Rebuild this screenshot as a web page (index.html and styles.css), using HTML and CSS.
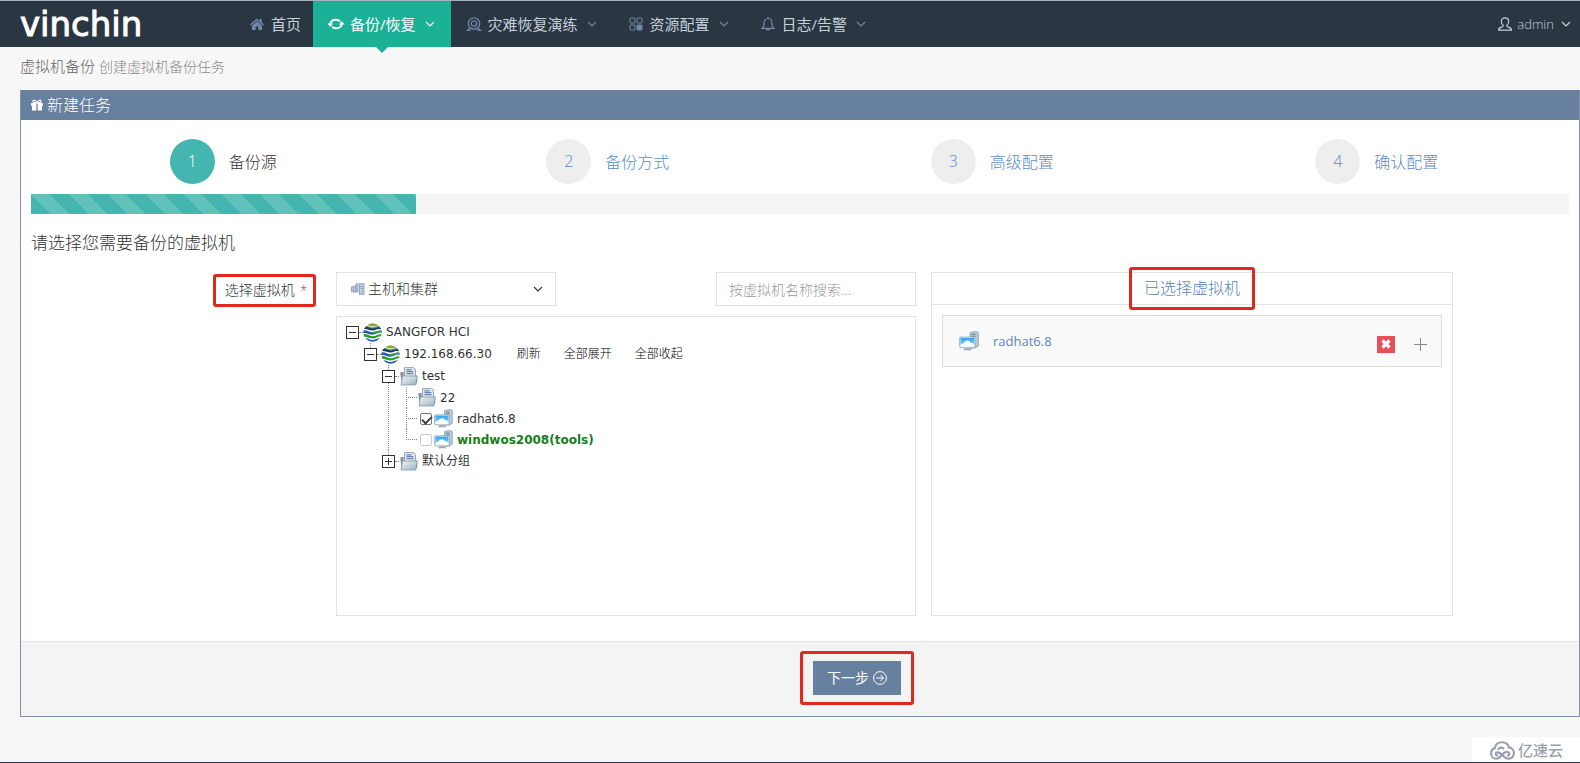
FILE: index.html
```html
<!DOCTYPE html>
<html lang="zh-CN">
<head>
<meta charset="utf-8">
<meta name="viewport" content="width=device-width, initial-scale=1">
<title>新建任务</title>
<link rel="stylesheet" href="styles.css">
</head>
<body>
<svg class="defs" width="0" height="0" aria-hidden="true">
  <defs>
    <linearGradient id="folderFill" x1="0" y1="0" x2="1" y2="1">
      <stop offset="0" stop-color="#eef3f6"/><stop offset="1" stop-color="#9db3c1"/>
    </linearGradient>
    <linearGradient id="screenFill" x1="0" y1="0" x2="0" y2="1">
      <stop offset="0" stop-color="#2fa9f0"/><stop offset="1" stop-color="#8fd6fb"/>
    </linearGradient>
    <clipPath id="globeClip"><circle cx="9.500" cy="9.500" r="9.300"/></clipPath>
    <symbol id="chevron" viewBox="0 0 10 10"><path d="M1 3l4 4 4-4" fill="none" stroke="currentColor" stroke-width="1.200"/></symbol>
    <symbol id="globe" viewBox="0 0 19 19">
      <g clip-path="url(#globeClip)">
        <path d="M4 2C7-1 13-1 16 3c-3-1-4 .5-6.500.5S6 2 4 2z" fill="#8fa63a"/>
        <path d="M1.500 4C5 2.500 6 5 9.500 5S14 2.500 18 4v2.500C14 5 13 7.500 9.500 7.500S4 5.500 1 6z" fill="#22356f"/>
        <path d="M3 3.500C6 3 7 5 9.500 5S14 3 17 4" fill="none" stroke="#4e9b3c" stroke-width="1.100"/>
        <path d="M0 7.500c4-1 6 1.800 9.500 1.800C13 9.300 14 7 19 7.500v2.200c-4-.7-6 2.100-9.500 2.100C6 11.800 4 9.500 0 10z" fill="#2d58b4"/>
        <path d="M8 9c3 .5 5-1.800 11-1v1.500c-5-.7-6 1-9 1z" fill="#35b52f"/>
        <path d="M0 11.200c4-.6 6 2 9.500 2 3.500 0 5.500-2.500 9.500-2v2c-4-.5-6 2.200-9.500 2.200-3.500 0-5.500-2.200-9.500-1.700z" fill="#21a428"/>
        <path d="M2 15.300c3-.2 4.500 1.700 7.500 1.700s4.500-2 8-1.700l-3 3.700h-9z" fill="#2c59bd"/>
      </g>
    </symbol>
    <symbol id="folder" viewBox="0 0 19 19">
      <path d="M5.500 .6h9L16.500 2.500v9h-11z" fill="#dfe6ec" stroke="#8296a8" stroke-width=".800"/>
      <path d="M7.500 2.800h5M7.500 4.700h7M7.500 6.600h7" stroke="#6689b0" stroke-width="1.200"/>
      <path d="M1.200 6l1-1h2.500v5h12v-2l1.500 1V15l-2 3H3z" fill="#8195a3"/>
      <path d="M3.500 9h14.800l-1.500 9H2z" fill="url(#folderFill)" stroke="#7d909e" stroke-width=".700"/>
    </symbol>
    <symbol id="vm" viewBox="0 0 20 20">
      <path d="M11 1.500L17 .5l2.300 1v13.500l-3 2h-5z" fill="#b9c9d6" stroke="#8096a8" stroke-width=".700"/>
      <path d="M12.500 3.300h4M12.500 5.300h4" stroke="#5f7388" stroke-width=".900"/>
      <rect x=".6" y="6" width="15.500" height="10.800" rx="1" fill="#d5e2ea" stroke="#8da0ae" stroke-width=".700"/>
      <rect x="1.600" y="7" width="13.500" height="8.800" fill="url(#screenFill)"/>
      <path d="M1.600 15.800v-1.600c1.200-1.900 2.300-2.200 3.200-2 1-3.300 5.600-3.500 6.800-.3 1.800-.3 2.700.5 3.500 2.300v1.600z" fill="#fff"/>
      <path d="M6 17.200h5l2 2H4z" fill="#9aa9b5"/>
    </symbol>
  </defs>
</svg>

<header class="topbar">
  <a class="logo" href="#">vinchin</a>
  <nav class="nav">
    <a class="nav-item nav-home" href="#">
      <svg class="nav-icon" viewBox="0 0 14 14"><path d="M7 1.500L0 7.500l.9 1L7 3.400l6.100 5.100.9-1-2.300-2V2h-1.900v1.900z" fill="currentColor"/><path d="M7 4.400L2 8.500V13h3.700V9.500h2.600V13H12V8.500z" fill="currentColor"/></svg>
      <span>首页</span>
    </a>
    <a class="nav-item nav-menu active" href="#">
      <svg class="nav-icon" viewBox="0 0 14 14"><path d="M1.200 7.500C1.500 4.300 4 2.700 6.800 2.700c1.600 0 2.900.5 4 1.600" fill="none" stroke="currentColor" stroke-width="2"/><path d="M-1.500 6.500h5.600L1.300 10z" fill="currentColor"/><path d="M12.800 6.500c-.3 3.200-2.800 4.800-5.600 4.800-1.600 0-2.900-.5-4-1.600" fill="none" stroke="currentColor" stroke-width="2"/><path d="M15.500 7.500H9.900L12.700 4z" fill="currentColor"/></svg>
      <span>备份/恢复</span>
      <svg class="chevron"><use href="#chevron"/></svg>
    </a>
    <a class="nav-item nav-menu" href="#">
      <svg class="nav-icon" viewBox="0 0 14 14" fill="none" stroke="currentColor" stroke-width="1.300"><circle cx="7" cy="6.500" r="5.700"/><circle cx="7" cy="6.500" r="2.700"/><path d="M3 11l-2.300 2.300h2.800M11 11l2.300 2.300h-2.800"/></svg>
      <span>灾难恢复演练</span>
      <svg class="chevron"><use href="#chevron"/></svg>
    </a>
    <a class="nav-item nav-menu" href="#">
      <svg class="nav-icon" viewBox="0 0 14 14" fill="none" stroke="currentColor"><rect x="1" y="1" width="5" height="5" rx=".5"/><rect x="8" y="1" width="5" height="5" rx=".5"/><rect x="1" y="8" width="5" height="5" rx=".5"/><rect x="8" y="8" width="5" height="5" rx=".5" fill="currentColor"/></svg>
      <span>资源配置</span>
      <svg class="chevron"><use href="#chevron"/></svg>
    </a>
    <a class="nav-item nav-menu" href="#">
      <svg class="nav-icon" viewBox="0 0 14 14" fill="none" stroke="currentColor" stroke-width="1.200"><path d="M1.200 11.400c1.600-1 1.900-2.600 1.900-5.200C3.100 3.400 4.600 1.500 7 1.500s3.900 1.900 3.900 4.700c0 2.600.3 4.200 1.900 5.200zM7 0v1.500M5.300 11.600c.2 1.800 3.200 1.800 3.400 0"/></svg>
      <span>日志/告警</span>
      <svg class="chevron"><use href="#chevron"/></svg>
    </a>
  </nav>
  <a class="user" href="#">
    <svg class="nav-icon" viewBox="0 0 14 14" fill="none" stroke="currentColor" stroke-width="1.200"><path d="M5.300 8.300C3.900 7.500 3.300 6 3.300 4.400 3.300 2.300 4.800.8 7 .8s3.700 1.500 3.700 3.600c0 1.600-.6 3.100-2 3.900-.3 1.200.4 1.500 1.800 1.900 1.900.5 2.900 1 2.900 2.900H.6c0-1.900 1-2.400 2.900-2.900 1.400-.4 2.100-.7 1.800-1.900z"/></svg>
    <span>admin</span>
    <svg class="chevron"><use href="#chevron"/></svg>
  </a>
</header>

<h1 class="page-title">虚拟机备份 <small>创建虚拟机备份任务</small></h1>

<main class="panel">
  <h2 class="panel-head">
    <svg class="gift" viewBox="0 0 12 12" fill="currentColor"><path d="M0 4h5v3H0zM7 4h5v3H7zM1 7h4v4.500H1zM7 7h4v4.500H7z"/><path d="M5.500 4h1v7.500h-1z" opacity=".7"/><path d="M6 4C5 1 2 .2 2 2.300 2 3.700 4 4 6 4zm0 0c1-3 4-3.800 4-1.700C10 3.700 8 4 6 4z" fill="none" stroke="currentColor" stroke-width="1.300"/></svg>
    新建任务
  </h2>
  <div class="panel-body">
    <ol class="steps">
      <li class="step current"><a href="#"><span class="num">1</span>备份源</a></li>
      <li class="step"><a href="#"><span class="num">2</span>备份方式</a></li>
      <li class="step"><a href="#"><span class="num">3</span>高级配置</a></li>
      <li class="step"><a href="#"><span class="num">4</span>确认配置</a></li>
    </ol>
    <div class="progress"><div class="bar"></div></div>
    <h3 class="prompt">请选择您需要备份的虚拟机</h3>

    <div class="form">
      <label class="field-label" for="view">选择虚拟机 <span class="required">*</span></label>
      <div class="source">
        <div class="filters">
          <div class="select-box">
            <svg class="select-icon" viewBox="0 0 14 13" fill="#c3cede" stroke="#8c9db8" stroke-width=".900"><path d="M.5 4h2v5h-2zM2.500 3h2.500v6H2.500zM5 .8h2V9H5z"/><rect x="8.500" y=".8" width="4.500" height="10.500"/><path d="M9.500 3.500h2.500M9.500 5.500h2.500M10 9h2"/></svg>
            <select id="view"><option>主机和集群</option></select>
            <svg class="chevron"><use href="#chevron"/></svg>
          </div>
          <input class="search" type="text" aria-label="搜索" placeholder="按虚拟机名称搜索...">
        </div>
        <div class="tree-box">
          <ul class="tree">
            <li>
              <div class="row"><button class="toggle" aria-label="收起"></button><i class="link"></i><svg class="node"><use href="#globe"/></svg><span>SANGFOR HCI</span></div>
              <ul>
                <li>
                  <div class="row"><button class="toggle" aria-label="收起"></button><i class="link"></i><svg class="node"><use href="#globe"/></svg><span>192.168.66.30</span>
                    <span class="actions"><a href="#">刷新</a><a href="#">全部展开</a><a href="#">全部收起</a></span></div>
                  <ul>
                    <li>
                      <div class="row"><button class="toggle" aria-label="收起"></button><i class="link"></i><svg class="node"><use href="#folder"/></svg><span>test</span></div>
                      <ul>
                        <li><div class="row leaf"><i class="branch"></i><svg class="node"><use href="#folder"/></svg><span>22</span></div></li>
                        <li><div class="row leaf"><i class="branch"></i><input class="check" type="checkbox" id="vm1" checked><svg class="node"><use href="#vm"/></svg><label for="vm1">radhat6.8</label></div></li>
                        <li><div class="row leaf"><i class="branch"></i><input class="check" type="checkbox" id="vm2"><svg class="node"><use href="#vm"/></svg><label class="tools" for="vm2">windwos2008(tools)</label></div></li>
                      </ul>
                    </li>
                    <li>
                      <div class="row"><button class="toggle closed" aria-label="展开"></button><i class="link"></i><svg class="node"><use href="#folder"/></svg><span>默认分组</span></div>
                    </li>
                  </ul>
                </li>
              </ul>
            </li>
          </ul>
        </div>
      </div>
      <section class="selected">
        <h4 class="selected-head"><span class="marked">已选择虚拟机</span></h4>
        <div class="vm-card">
          <svg class="vm-icon"><use href="#vm"/></svg>
          <a class="vm-name" href="#">radhat6.8</a>
          <div class="vm-actions">
            <button class="remove" aria-label="移除"><svg viewBox="0 0 10 10"><path d="M1.500 1.500l7 7M8.500 1.500l-7 7" stroke="#fff" stroke-width="3.200"/></svg></button>
            <button class="expand" aria-label="展开"><svg viewBox="0 0 13 13"><path d="M6.500 0v13M0 6.500h13" stroke="#888" stroke-width="1"/></svg></button>
          </div>
        </div>
      </section>
    </div>
  </div>
  <div class="panel-foot">
    <div class="next-frame">
      <button class="next">下一步<svg viewBox="0 0 14 14" fill="none" stroke="#fff"><circle cx="7" cy="7" r="6.400"/><path d="M3 7h7.500M7.500 4l3 3-3 3"/></svg></button>
    </div>
  </div>
</main>

<div class="watermark">
  <svg viewBox="0 0 26 20" fill="none" stroke="#9b9fad" stroke-width="2.200" stroke-linecap="round"><path d="M5 7.500C5.500 3.800 8.500 1.300 12.500 1.300c3.800 0 6.500 2 7.500 5.700 3 .2 5 2.600 5 5.700 0 3.500-2.500 6-6 6-5 0-6.500-7.200-11.500-6.700-2.300.3-2.200 3.200 0 3.200M5 7.500c-2.500.6-4 3-4 5.700 0 3.300 2.400 5.500 5.500 5.500 5 0 6.500-7.700 11.500-7.200 3 .3 3 3.700.5 3.700M8.500 8.500c1.500-2 4-2 5.500-.5"/></svg>
  <span>亿速云</span>
</div>
</body>
</html>
```

FILE: styles.css
```css
* { box-sizing: border-box; }

body {
  margin: 0;
  min-height: 100vh;
  position: relative;
  background: #f7f7f7;
  border-bottom: 1px solid #2b3643;
  color: #333;
  font: 300 14px/20px "Open Sans", "Noto Sans CJK SC", sans-serif;
}

a { color: inherit; text-decoration: none; }
ul, ol { list-style: none; margin: 0; padding: 0; }
h1, h2, h3, h4 { margin: 0; font-weight: 300; }
button, input, select { font: inherit; color: inherit; margin: 0; border-radius: 0; }
button { padding: 0; border: 0; background: none; cursor: pointer; }
svg { display: block; flex: none; overflow: visible; }
.defs { position: absolute; }
.chevron { width: 10px; height: 10px; }

/* Top bar */
.topbar {
  display: flex;
  height: 47px;
  padding-left: 20px;
  background: #2b3643;
  border-top: 1px solid #a3b3bb;
  color: #c6cfda;
}
.logo {
  width: 216px;
  color: #fff;
  font: 400 34px/46px "DejaVu Sans", sans-serif;
  -webkit-text-stroke: 1px #fff;
}
.nav { display: flex; flex: 1; font-size: 15px; font-weight: 400; }
.nav-item { display: flex; align-items: center; white-space: nowrap; }
.nav-icon { width: 14px; height: 14px; margin-right: 7px; color: #7186a8; }
.nav-item .chevron { margin-left: 9px; color: #7186a8; }
.nav-home { padding: 0 12px 0 14px; }
.nav-menu { padding: 0 16px; }
.nav-item.active { position: relative; background: #1bb197; color: #fff; }
.active .nav-icon, .active .chevron { color: #fff; }
.active::after {
  content: "";
  position: absolute;
  top: 100%;
  left: 50%;
  margin-left: -6px;
  border: 6px solid transparent;
  border-top-color: #1bb197;
  border-bottom: 0;
}
.user { display: flex; align-items: center; padding-right: 9px; font-size: 13px; }
.user .nav-icon { margin-right: 5px; color: inherit; }
.user .chevron { margin-left: 7px; }

.page-title {
  padding: 0 20px;
  margin-bottom: 4px;
  color: #666;
  font-size: 15px;
  line-height: 38px;
}
.page-title small { color: #888; font-size: 14px; }

/* Panel */
.panel { margin-left: 20px; background: #fff; border: 1px solid #8492a6; border-top: 0; }
.panel-head {
  display: flex;
  align-items: center;
  gap: 4px;
  height: 30px;
  padding-left: 10px;
  background: #67809f;
  color: #fff;
  font-size: 16px;
}
.gift { width: 12px; height: 12px; }
.panel-body { padding: 19px 10px 25px; }

.steps { display: grid; grid-template-columns: repeat(4, 1fr); margin-bottom: 10px; }
.step a {
  display: flex;
  align-items: center;
  justify-content: center;
  gap: 14px;
  color: #5b8dc4;
  font-size: 16px;
}
.num {
  width: 45px;
  border-radius: 50%;
  background: #eee;
  line-height: 45px;
  text-align: center;
}
.step.current a { color: #333; }
.current .num { background: #45b6af; color: #fff; }

.progress { height: 20px; background: #f4f4f4; }
.bar {
  width: 25%;
  height: 100%;
  background: #45b6af repeating-linear-gradient(45deg, transparent 0 14px, rgba(255,255,255,.15) 14px 27px);
}

.prompt { margin: 18px 0; font-size: 17px; line-height: 22px; }

/* Form */
.form { display: grid; grid-template-columns: 285fr 600fr 537fr 116fr; }
.field-label {
  justify-self: end;
  align-self: start;
  margin-top: 2px;
  padding: 0 6px 0 9px;
  border: 3px solid #e2281e;
  border-radius: 3px;
  line-height: 26px;
}
.required { margin-left: 2px; color: #e02222; font-size: 12px; }
.source { display: flex; flex-direction: column; gap: 10px; padding-left: 20px; }
.filters { display: flex; justify-content: space-between; }
.select-box, .search { height: 34px; border: 1px solid #e2e2e2; background: #fff; }
.select-box { display: flex; align-items: center; width: 220px; padding: 0 12px 0 14px; }
.select-icon { width: 14px; height: 13px; margin-right: 3px; }
.select-box select {
  flex: 1;
  min-width: 0;
  height: 32px;
  padding: 0;
  border: 0;
  background: none;
  appearance: none;
}
.search { width: 200px; padding: 0 12px; }
.search::placeholder { color: #999; }

.tree-box {
  min-height: 300px;
  padding: 4px 9px;
  border: 1px solid #e2e2e2;
  font: 400 12px/20px "DejaVu Sans", "Noto Sans CJK SC", sans-serif;
}
.tree ul { padding-left: 18px; }
.tree li { position: relative; }
.tree ul > li::before {
  content: "";
  position: absolute;
  top: 0;
  left: 6px;
  height: 100%;
  border-left: 1px dotted #888;
}
.tree ul > li:last-child::before { height: 11px; }
.row { display: flex; align-items: center; height: 22px; white-space: nowrap; }
.row.leaf { height: 21px; }
.toggle {
  position: relative;
  width: 13px;
  height: 13px;
  border: 1px solid #333;
  background: linear-gradient(#333, #333) center / 7px 1px no-repeat #fff;
}
.toggle.closed {
  background: linear-gradient(#333, #333) center / 7px 1px no-repeat, linear-gradient(#333, #333) center / 1px 7px no-repeat #fff;
}
.link { width: 4px; border-top: 1px dotted #888; }
.branch { width: 11px; margin-left: 6px; border-top: 1px dotted #888; }
.node { width: 19px; height: 19px; margin-right: 4px; }
.actions { display: flex; gap: 23px; margin-left: 25px; color: #000; font-weight: 300; }
.tools { color: #14801c; font-weight: 700; }
.check {
  appearance: none;
  width: 12px;
  height: 12px;
  margin: 0 2px 0 3px;
  border: 1px solid #ccc;
  border-radius: 2px;
  background: #fff;
}
.check:checked { position: relative; border-color: #777; }
.check:checked::after {
  content: "";
  position: absolute;
  top: 0;
  left: 3px;
  width: 4px;
  height: 8px;
  border: solid #444;
  border-width: 0 2px 2px 0;
  transform: rotate(45deg);
}

.selected { margin-left: 15px; border: 1px solid #e2e2e2; }
.selected-head {
  padding: 5px 0;
  border-bottom: 1px solid #e2e2e2;
  color: #5b85b5;
  font-size: 16px;
  line-height: 21px;
  text-align: center;
}
.marked { position: relative; display: inline-block; }
.marked::after {
  content: "";
  position: absolute;
  inset: -11px -15px;
  border: 3px solid #e2281e;
  border-radius: 3px;
}
.vm-card {
  display: flex;
  align-items: center;
  height: 52px;
  margin: 10px;
  padding: 0 14px 0 16px;
  border: 1px solid #ddd;
  background: #fafafa;
}
.vm-icon { width: 20px; height: 20px; }
.vm-name { flex: 1; margin-left: 14px; color: #5b85c0; font-size: 13px; font-weight: 400; }
.vm-actions { display: flex; align-items: center; gap: 19px; padding-top: 6px; }
.remove { display: grid; place-items: center; width: 18px; height: 17px; background: #e7505a; }
.remove svg { width: 10px; height: 10px; }
.expand svg { width: 13px; height: 13px; }

/* Footer */
.panel-foot { padding: 9px 0 11px; border-top: 1px solid #e2e2e2; background: #f4f4f4; }
.next-frame {
  width: max-content;
  margin-left: 50%;
  padding: 7px 10px;
  border: 3px solid #e2281e;
  border-radius: 3px;
}
.next {
  display: flex;
  align-items: center;
  gap: 4px;
  height: 34px;
  padding: 0 14px;
  background: #67809f;
  color: #fff;
  font-weight: 400;
}
.next svg { width: 14px; height: 14px; }

.watermark {
  position: absolute;
  right: 0;
  bottom: -1px;
  display: flex;
  align-items: center;
  gap: 3px;
  height: 26px;
  padding: 0 17px 0 18px;
  background: #fff;
  color: #9b9fad;
  font-size: 15px;
  font-weight: 500;
}
.watermark svg { width: 25px; height: 19px; }
```
